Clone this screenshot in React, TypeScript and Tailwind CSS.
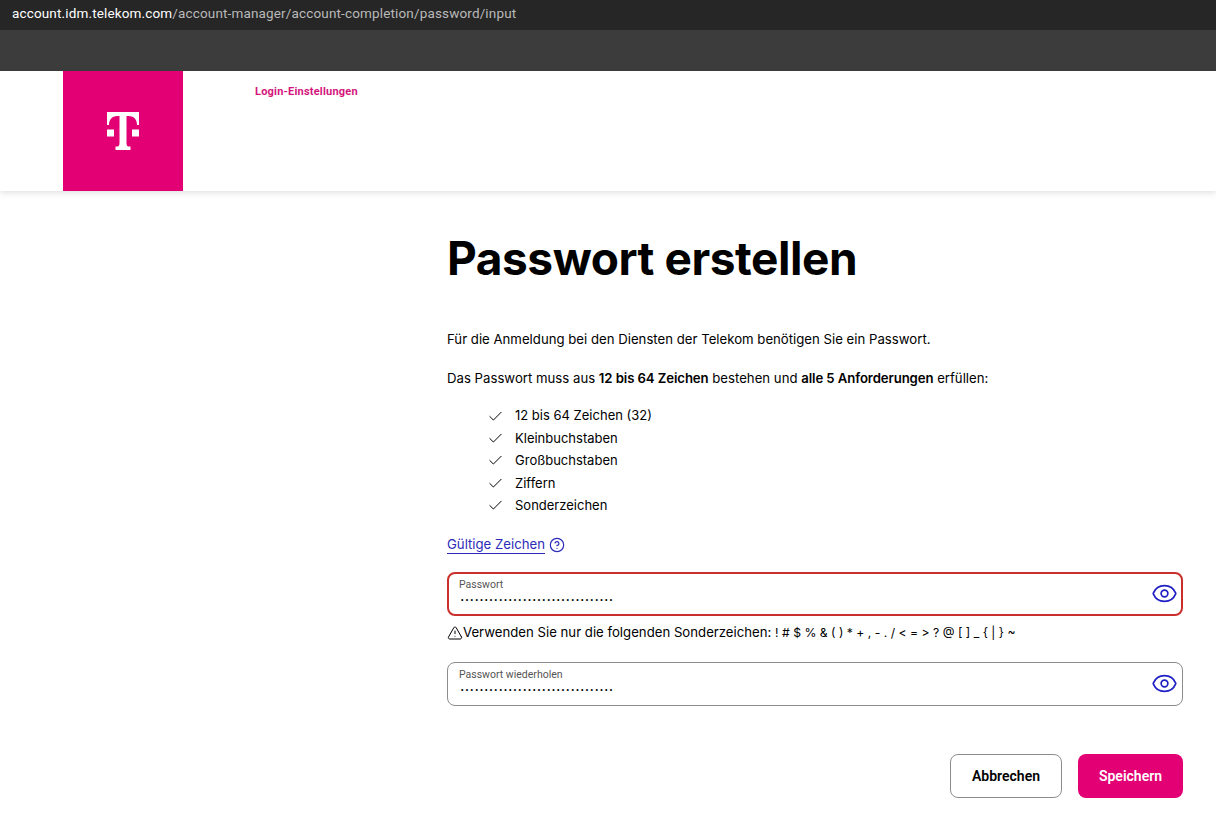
import { Check, CircleHelp, Eye, TriangleAlert } from "lucide-react";

const requirements = [
  "12 bis 64 Zeichen (32)",
  "Kleinbuchstaben",
  "Großbuchstaben",
  "Ziffern",
  "Sonderzeichen",
];

const dots = "•".repeat(32);

function TLogo() {
  return (
    <svg viewBox="0 0 32 38" className="w-[32px] h-[38px]" fill="#fff">
      <path d="M0 0h32v13h-2c0-5-2.500-9-8.500-9h-2v27c0 3 1 3.500 3 3.500h1V38H8.500v-3.500h1c2 0 3-.5 3-3.500V4h-2C4.500 4 2 8 2 13H0z" />
      <rect x="0" y="17.500" width="7" height="7" />
      <rect x="25" y="17.500" width="7" height="7" />
    </svg>
  );
}

function PasswordField({ label, error }: { label: string; error?: boolean }) {
  return (
    <div
      className={`flex items-center justify-between h-[44px] bg-white rounded-[8px] ${
        error ? "border-2 border-[#c9302c] pl-[10px] pr-[3px]" : "border border-[#8c8c8c] pl-[11px] pr-[4px]"
      }`}
    >
      <div className="flex flex-col pb-[2px]">
        <span className="font-['Roboto',sans-serif] text-[10.500px] leading-[12px] text-[#555]">{label}</span>
        <span className="mt-[2px] pl-[2px] font-['Liberation_Sans',sans-serif] text-[7px] leading-[14px] tracking-[2.350px] text-black">{dots}</span>
      </div>
      <Eye className="w-[27px] h-[27px] text-[#1f1fc4]" strokeWidth={1.500} />
    </div>
  );
}

export default function App() {
  return (
    <div className="w-[1216px] h-[830px] overflow-hidden bg-white flex flex-col font-['Inter',sans-serif] text-black">
      <div className="h-[30px] bg-[#262626] pl-[12px] pb-[3px] flex items-center text-[13.500px] font-['Roboto',sans-serif] tracking-[0.150px] text-[#b9b9b9]">
        <span className="text-white">account.idm.telekom.com</span>
        <span>/account-manager/account-completion/password/input</span>
      </div>
      <div className="h-[41px] bg-[#3c3c3c]" />

      <header className="h-[120px] bg-white flex shadow-[0_2px_6px_rgba(0,0,0,0.12)] pl-[63px] z-10">
        <div className="w-[120px] h-[120px] bg-[#e20074] flex items-center justify-center">
          <TLogo />
        </div>
        <div className="ml-[72px] mt-[14px] text-[#d4157c] text-[11px] leading-[14px] font-bold font-['Roboto',sans-serif] tracking-[0.200px]">
          Login-Einstellungen
        </div>
      </header>

      <main className="pl-[447px] pr-[33px] pt-[37px] flex flex-col">
        <h1 className="text-[46px] leading-[60px] font-bold tracking-[-0.450px]">Passwort erstellen</h1>

        <p className="mt-[41px] text-[13.200px] leading-[20px]">
          Für die Anmeldung bei den Diensten der Telekom benötigen Sie ein Passwort.
        </p>
        <p className="mt-[19px] text-[13.200px] leading-[20px]">
          Das Passwort muss aus <b className="font-semibold tracking-[-0.100px]">12 bis 64 Zeichen</b> bestehen und{" "}
          <b className="font-semibold tracking-[-0.100px]">alle 5 Anforderungen</b> erfüllen:
        </p>

        <ul className="mt-[17px] pl-[40px] flex flex-col">
          {requirements.map((item) => (
            <li key={item} className="flex items-center h-[22.400px] text-[13px]">
              <Check className="w-[17px] h-[17px] mr-[11px]" strokeWidth={1.400} />
              {item}
            </li>
          ))}
        </ul>

        <div className="mt-[17px] h-[22px] flex items-center text-[13.200px] text-[#2b2bb8]">
          <span className="border-b border-[#2b2bb8] leading-[18px]">Gültige Zeichen</span>
          <CircleHelp className="ml-[4px] w-[16px] h-[16px]" strokeWidth={1.800} />
        </div>

        <div className="mt-[16px]">
          <PasswordField label="Passwort" error />
        </div>

        <div className="mt-[6px] h-[22px] flex items-center text-[13.200px]">
          <TriangleAlert className="w-[16px] h-[16px]" strokeWidth={1.500} />
          <span>
            Verwenden Sie nur die folgenden Sonderzeichen:{" "}
            <span className="text-[12.200px]">! # $ % &amp; ( ) * + , - . / &lt; = &gt; ? @ [ ] _ {"{"} | {"}"} ~</span>
          </span>
        </div>

        <div className="mt-[18px]">
          <PasswordField label="Passwort wiederholen" />
        </div>

        <div className="mt-[48px] flex justify-end gap-[16px]">
          <button className="w-[112px] h-[44px] rounded-[8px] border border-[#8c8c8c] bg-white text-[14px] font-semibold font-['Roboto',sans-serif] pt-[1px]">
            Abbrechen
          </button>
          <button className="w-[105px] h-[44px] rounded-[8px] bg-[#e20074] text-white text-[14px] font-semibold font-['Roboto',sans-serif] pt-[1px]">
            Speichern
          </button>
        </div>
      </main>
    </div>
  );
}
